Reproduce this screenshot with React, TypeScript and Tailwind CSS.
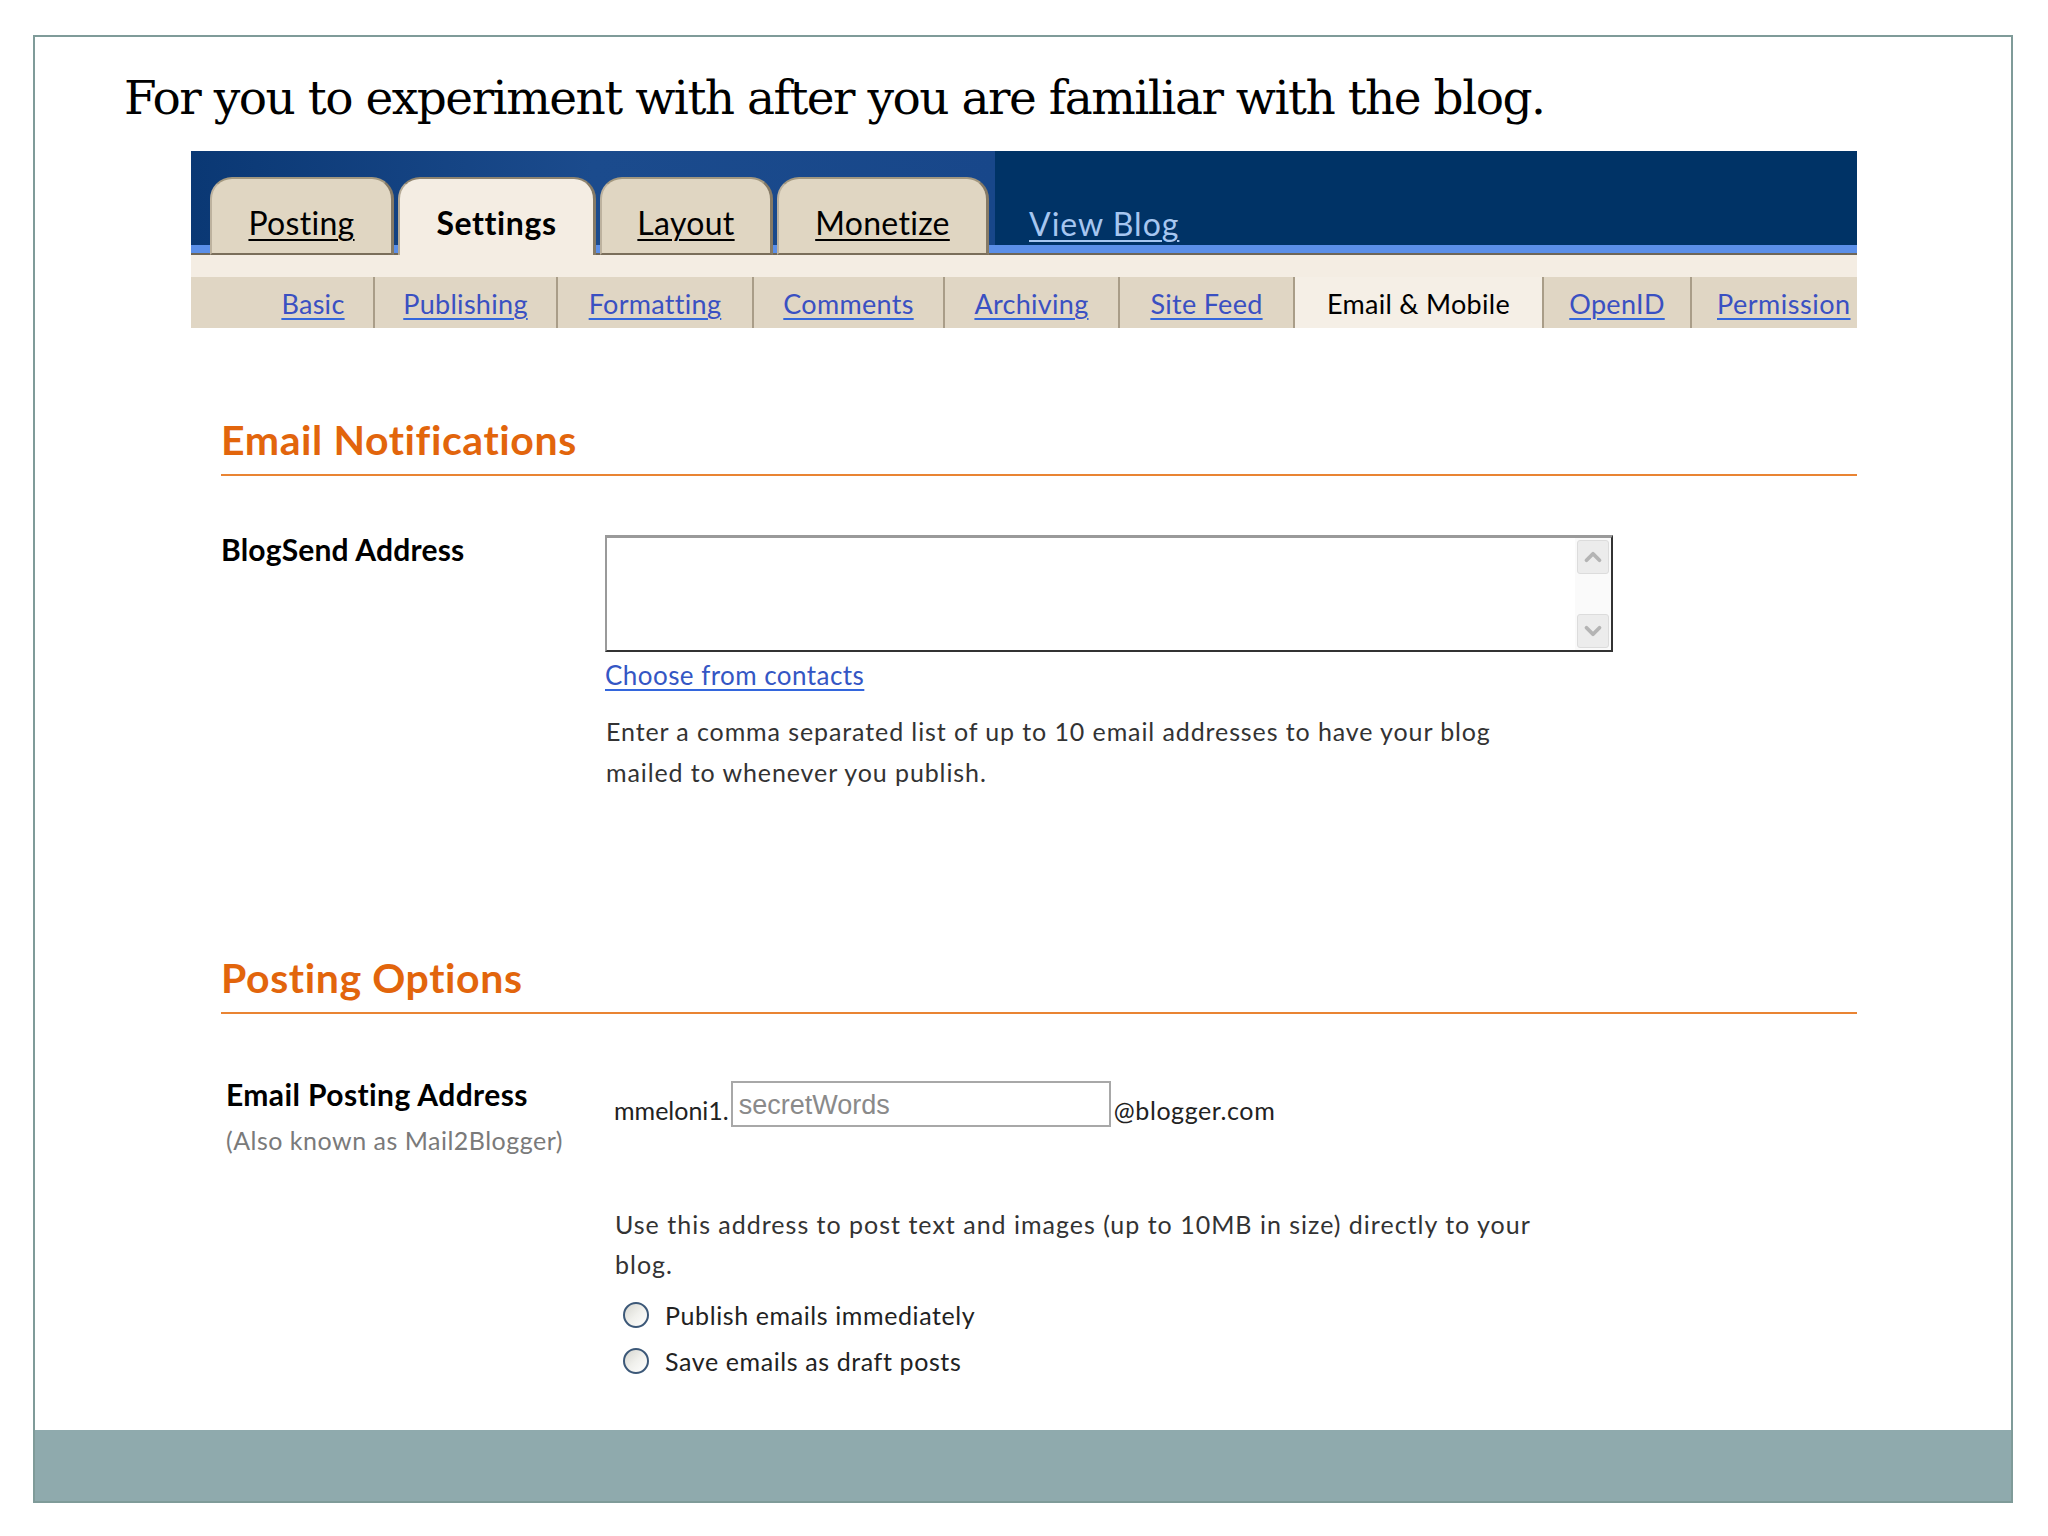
import { ChevronUp, ChevronDown } from "lucide-react";

const mainTabs = [
  { label: "Posting", width: "w-[184px]" },
  { label: "Settings", width: "w-[198px]", active: true },
  { label: "Layout", width: "w-[173px]" },
  { label: "Monetize", width: "w-[212px]" },
];

const subTabs = [
  { label: "Basic", width: "w-[120px]" },
  { label: "Publishing", width: "w-[181px]" },
  { label: "Formatting", width: "w-[194px]" },
  { label: "Comments", width: "w-[189px]" },
  { label: "Archiving", width: "w-[173px]" },
  { label: "Site Feed", width: "w-[173px]" },
  { label: "Email & Mobile", width: "w-[247px]", active: true },
  { label: "OpenID", width: "w-[146px]" },
];

function MainTab({ label, width, active }: { label: string; width: string; active?: boolean }) {
  if (active) {
    return (
      <div
        className={`${width} relative z-10 -mb-[10px] flex h-[78px] items-end justify-center rounded-t-[22px] border-l-2 border-r-[3px] border-t-2 border-l-[#b5aa96] border-r-[#857a66] border-t-[#8f846f] bg-[#f4ede3] pb-[12px]`}
      >
        <span className="text-[32px] font-bold leading-[40px] tracking-[0.6px] text-black">{label}</span>
      </div>
    );
  }
  return (
    <div
      className={`${width} relative z-10 -mb-[10px] flex h-[78px] items-end justify-center rounded-t-[22px] border-b-2 border-l-2 border-r-[3px] border-t-2 border-b-[#7a6e5a] border-l-[#bdb29e] border-r-[#857a66] border-t-[#a3987f] bg-[#e0d6c2] pb-[10px]`}
    >
      <span className="text-[32px] leading-[40px] tracking-[0.3px] text-black underline decoration-2 underline-offset-[4px]">
        {label}
      </span>
    </div>
  );
}

function SubTab({ label, width, active }: { label: string; width: string; active?: boolean }) {
  return (
    <div className={`${width} flex h-full items-center justify-center pt-[2px] ${active ? "bg-[#f5efe6]" : ""}`}>
      {active ? (
        <span className="text-[27px] leading-[32px] tracking-[0.3px] text-black">{label}</span>
      ) : (
        <span className="text-[27px] leading-[32px] tracking-[0.3px] text-[#3a50c2] underline decoration-[#3366dd] decoration-2 underline-offset-[4px]">
          {label}
        </span>
      )}
    </div>
  );
}

function Radio({ label }: { label: string }) {
  return (
    <div className="flex h-[46px] items-center">
      <div className="ml-[9px] h-[26px] w-[26px] rounded-full border-2 border-[#3c5878] bg-gradient-to-br from-[#d6d6d0] via-[#f0f0ec] to-white" />
      <span className="ml-[16px] text-[25px] leading-[32px] tracking-[0.6px] text-[#222]">{label}</span>
    </div>
  );
}

function SectionHeading({ title, className }: { title: string; className: string }) {
  return (
    <div className={`${className} border-b-2 border-[#e98433] pb-[10px]`}>
      <h2 className="text-[41px] font-bold leading-[48px] tracking-[0.6px] text-[#e2650c]">{title}</h2>
    </div>
  );
}

export default function App() {
  return (
    <div className="h-[1536px] w-[2048px] bg-white pl-[33px] pt-[35px] font-['Lato',sans-serif]">
      <div className="flex h-[1468px] w-[1980px] flex-col border-2 border-[#7f9b99]">
        <p className="mt-[33px] pl-[89px] font-['DejaVu_Serif',serif] text-[47px] leading-[56px] tracking-[-1.5px] text-black">
          For you to experiment with after you are familiar with the blog.
        </p>

        <div className="ml-[156px] mt-[25px] w-[1666px]">
          {/* top navigation */}
          <div className="bg-[#003366]">
            <div className="flex h-[94px] items-end">
              <div className="flex h-full w-[804px] items-end bg-gradient-to-r from-[#0a3874] via-[#1b4b8d] to-[#18478a] pl-[19px]">
                <div className="flex gap-[4px]">
                  {mainTabs.map((t) => (
                    <MainTab key={t.label} {...t} />
                  ))}
                </div>
              </div>
              <span className="mb-[1px] ml-[34px] text-[32px] leading-[40px] tracking-[1px] text-[#a6c6f0] underline decoration-2 underline-offset-[4px]">
                View Blog
              </span>
            </div>
            <div className="h-[10px] border-b-2 border-[#6f6657] bg-[#5b8fe8]" />
          </div>
          <div className="h-[22px] bg-[#f4ede3]" />

          {/* sub navigation */}
          <div className="flex h-[51px] overflow-hidden bg-[#e0d6c4] pl-[62px]">
            {subTabs.map((t) => (
              <div key={t.label} className="flex h-full">
                <SubTab {...t} />
                <div className="h-full w-[2px] bg-[#a99d88]" />
              </div>
            ))}
            <div className="flex h-full w-[165px] items-center overflow-hidden whitespace-nowrap pl-[25px] pt-[2px]">
              <span className="text-[27px] leading-[32px] tracking-[0.5px] text-[#3a50c2] underline decoration-[#3366dd] decoration-2 underline-offset-[4px]">
                Permission
              </span>
            </div>
          </div>

          {/* email notifications */}
          <div className="pl-[30px]">
            <SectionHeading title="Email Notifications" className="mt-[88px]" />

            <div className="mt-[55px] flex items-start">
              <div className="w-[384px] text-[30px] font-bold leading-[36px] tracking-[0.2px] text-black">BlogSend Address</div>
              <div className="pt-[4px]">
                <div className="flex h-[117px] w-[1008px] border-b-2 border-l-2 border-r-2 border-t-[3px] border-b-[#333] border-l-[#9a9a9a] border-r-[#333] border-t-[#9a9a9a] bg-white">
                  <div className="flex-1" />
                  <div className="flex w-[36px] flex-col justify-between bg-[#fafafa] p-[2px]">
                    <div className="flex h-[34px] items-center justify-center rounded-[3px] border border-[#dcdcdc] bg-[#ececec]">
                      <ChevronUp size={26} strokeWidth={3.5} color="#b4b4b4" />
                    </div>
                    <div className="flex h-[34px] items-center justify-center rounded-[3px] border border-[#dcdcdc] bg-[#ececec]">
                      <ChevronDown size={26} strokeWidth={3.5} color="#b4b4b4" />
                    </div>
                  </div>
                </div>
                <div className="mt-[7px] text-[26px] leading-[32px] tracking-[0.45px] text-[#3456c4] underline decoration-[#3366dd] decoration-2 underline-offset-[4px]">
                  Choose from contacts
                </div>
                <p className="mt-[20px] whitespace-nowrap pl-[1px] text-[25px] leading-[41px] tracking-[0.9px] text-[#333]">
                  Enter a comma separated list of up to 10 email addresses to have your blog
                  <br />
                  mailed to whenever you publish.
                </p>
              </div>
            </div>

            {/* posting options */}
            <SectionHeading title="Posting Options" className="mt-[161px]" />

            <div className="mt-[62px] flex items-start">
              <div className="w-[393px] pl-[5px]">
                <div className="text-[30px] font-bold leading-[36px] tracking-[0.4px] text-black">Email Posting Address</div>
                <div className="mt-[12px] text-[25px] leading-[32px] tracking-[0.5px] text-[#7a7a7a]">(Also known as Mail2Blogger)</div>
              </div>
              <div>
                <div className="flex items-start">
                  <span className="mt-[18px] text-[25px] leading-[32px] text-[#222]">mmeloni1.</span>
                  <div className="ml-[2px] mt-[5px] flex h-[46px] w-[380px] items-center border-2 border-[#a8a8a8] bg-white pl-[6px] pt-[2px]">
                    <span className="font-['Liberation_Sans',sans-serif] text-[27px] leading-[32px] text-[#8a8a8a]">
                      secretWords
                    </span>
                  </div>
                  <span className="ml-[3px] mt-[18px] text-[25px] leading-[32px] tracking-[0.6px] text-[#222]">
                    @blogger.com
                  </span>
                </div>
                <p className="mt-[77px] whitespace-nowrap pl-[1px] text-[25px] leading-[40px] tracking-[1px] text-[#333]">
                  Use this address to post text and images (up to 10MB in size) directly to your
                  <br />
                  blog.
                </p>
                <div className="mt-[8px]">
                  <Radio label="Publish emails immediately" />
                  <Radio label="Save emails as draft posts" />
                </div>
              </div>
            </div>
          </div>
        </div>

        <div className="flex-1" />
        <div className="h-[71px] bg-[#8faaad]" />
      </div>
    </div>
  );
}
